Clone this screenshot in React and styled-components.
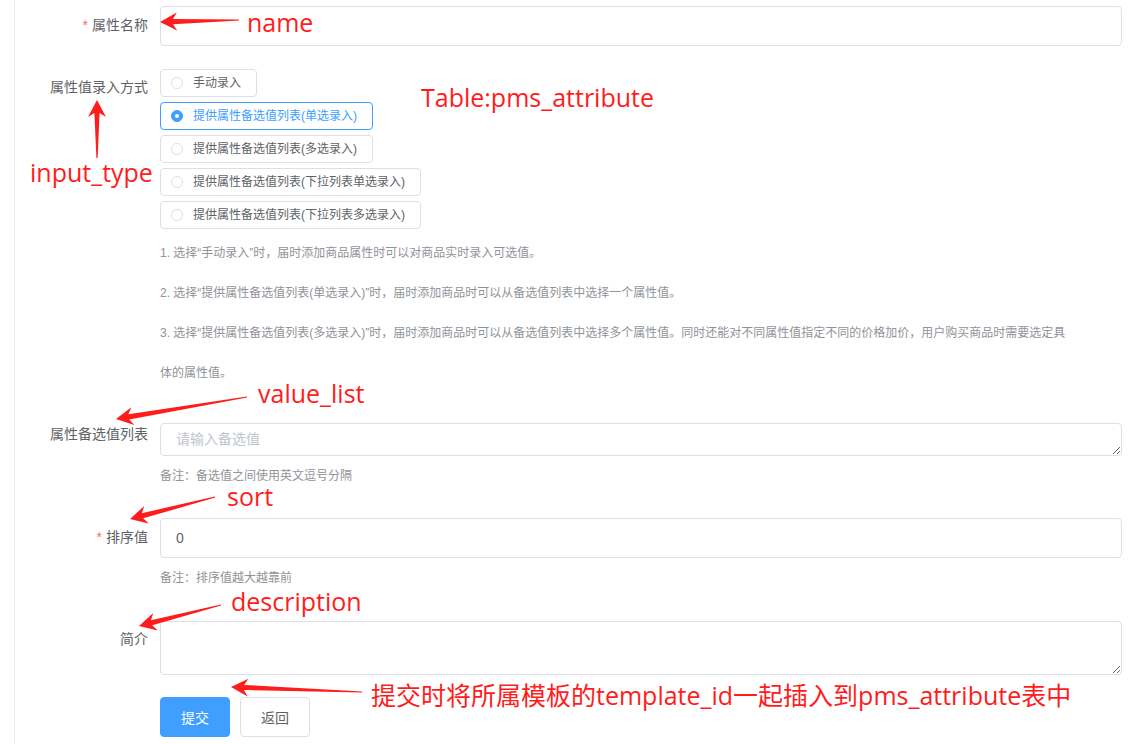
import React from "react";
import styled, { createGlobalStyle } from "styled-components";

const GlobalStyle = createGlobalStyle`
  html, body {
    margin: 0;
    padding: 0;
    background: #fff;
  }
  body {
    font-family: "Liberation Sans", "Noto Sans CJK SC", sans-serif;
  }
  * {
    box-sizing: border-box;
  }
`;

const RED = "#ff1c1c";

const radios = [
  { label: "手动录入", checked: false },
  { label: "提供属性备选值列表(单选录入)", checked: true },
  { label: "提供属性备选值列表(多选录入)", checked: false },
  { label: "提供属性备选值列表(下拉列表单选录入)", checked: false },
  { label: "提供属性备选值列表(下拉列表多选录入)", checked: false },
];

const notes = [
  { x: 247, y: 9, text: "name" },
  { x: 421, y: 84, text: "Table:pms_attribute" },
  { x: 30, y: 159, text: "input_type" },
  { x: 258, y: 380, text: "value_list" },
  { x: 227, y: 483, text: "sort" },
  { x: 231, y: 588, text: "description" },
  { x: 371, y: 682, text: "提交时将所属模板的template_id一起插入到pms_attribute表中" },
];

// tail -> tip
const arrows = [
  [239, 20, 160, 22],
  [97, 158, 97, 100],
  [247, 397, 116, 419],
  [215, 497, 130, 519],
  [221, 605, 139, 626],
  [362, 692, 231, 687],
];

const arrowPoints = ([x0, y0, x1, y1]) => {
  const dx = x1 - x0;
  const dy = y1 - y0;
  const len = Math.hypot(dx, dy);
  const ux = dx / len;
  const uy = dy / len;
  const nx = -uy;
  const ny = ux;
  const local = [
    [0, 0.6],
    [len - 13, 2.6],
    [len - 17, 9],
    [len, 0],
    [len - 17, -9],
    [len - 13, -2.6],
    [0, -0.6],
  ];
  return local
    .map(([a, b]) => `${(x0 + ux * a + nx * b).toFixed(1)},${(y0 + uy * a + ny * b).toFixed(1)}`)
    .join(" ");
};

const App = () => {
  return (
    <Page>
      <GlobalStyle />
      <Card>
        <FormItem>
          <Label>
            <Star>*</Star>属性名称
          </Label>
          <Content>
            <TextInput type="text" defaultValue="" />
          </Content>
        </FormItem>

        <FormItem>
          <Label>属性值录入方式</Label>
          <Content>
            <RadioGroup>
              {radios.map((r) => (
                <RadioOption key={r.label} $checked={r.checked}>
                  <RadioDot $checked={r.checked} />
                  <RadioText>{r.label}</RadioText>
                </RadioOption>
              ))}
            </RadioGroup>
            <Hints>
              <div>1. 选择“手动录入”时，届时添加商品属性时可以对商品实时录入可选值。</div>
              <div>2. 选择“提供属性备选值列表(单选录入)”时，届时添加商品时可以从备选值列表中选择一个属性值。</div>
              <div>
                3. 选择“提供属性备选值列表(多选录入)”时，届时添加商品时可以从备选值列表中选择多个属性值。同时还能对不同属性值指定不同的价格加价，用户购买商品时需要选定具
                <br />
                体的属性值。
              </div>
            </Hints>
          </Content>
        </FormItem>

        <FormItem>
          <Label>属性备选值列表</Label>
          <Content>
            <TextArea rows={1} placeholder="请输入备选值" $top={8} />
            <Note>备注：备选值之间使用英文逗号分隔</Note>
          </Content>
        </FormItem>

        <FormItem>
          <Label>
            <Star>*</Star>排序值
          </Label>
          <Content>
            <TextInput type="text" defaultValue="0" />
            <Note>备注：排序值越大越靠前</Note>
          </Content>
        </FormItem>

        <FormItem>
          <Label>简介</Label>
          <Content>
            <TextArea rows={2} $top={1} />
          </Content>
        </FormItem>

        <ButtonRow>
          <Button $primary>提交</Button>
          <Button>返回</Button>
        </ButtonRow>
      </Card>

      <Overlay width="1130" height="744" viewBox="0 0 1130 744">
        {arrows.map((a, i) => (
          <polygon key={i} points={arrowPoints(a)} fill={RED} />
        ))}
      </Overlay>
      {notes.map((n) => (
        <Annotation key={n.text} $x={n.x} $y={n.y}>
          {n.text}
        </Annotation>
      ))}
    </Page>
  );
};

const Page = styled.div`
  position: relative;
  width: 1130px;
  height: 744px;
  overflow: hidden;
  padding-left: 14px;
`;

const Card = styled.div`
  height: 100%;
  border-left: 1px solid #ebeef5;
  padding: 6px 8px 0 0;
`;

const FormItem = styled.div`
  display: flex;
  margin-bottom: 22px;
`;

const Label = styled.label`
  flex: none;
  width: 145px;
  padding-right: 12px;
  text-align: right;
  line-height: 38px;
  font-size: 14px;
  color: #606266;
`;

const Star = styled.span`
  color: #f56c6c;
  margin-right: 4px;
`;

const Content = styled.div`
  flex: 1;
  min-width: 0;
  line-height: 40px;
  font-size: 14px;
`;

const TextInput = styled.input`
  display: block;
  width: 100%;
  height: 40px;
  padding: 0 15px;
  border: 1px solid #dcdfe6;
  border-radius: 4px;
  font-family: inherit;
  font-size: 14px;
  color: #606266;
  outline: none;
`;

const TextArea = styled.textarea`
  display: block;
  width: 100%;
  margin-top: ${(p) => p.$top}px;
  padding: 5px 15px;
  border: 1px solid #dcdfe6;
  border-radius: 4px;
  font-family: inherit;
  font-size: 14px;
  line-height: 1.5;
  color: #606266;
  resize: vertical;
  outline: none;

  &::placeholder {
    color: #c0c4cc;
  }
`;

const RadioGroup = styled.div`
  display: flex;
  flex-direction: column;
  align-items: flex-start;
  gap: 5px;
  padding-top: 1px;
`;

const RadioOption = styled.label`
  display: inline-flex;
  align-items: center;
  height: 28px;
  padding: 0 15px 0 10px;
  border: 1px solid ${(p) => (p.$checked ? "#409eff" : "#dcdfe6")};
  border-radius: 4px;
  font-size: 12px;
  line-height: 1;
  color: ${(p) => (p.$checked ? "#409eff" : "#606266")};
`;

const RadioDot = styled.span`
  position: relative;
  width: 12px;
  height: 12px;
  border-radius: 50%;
  border: 1px solid ${(p) => (p.$checked ? "#409eff" : "#dcdfe6")};
  background: ${(p) => (p.$checked ? "#409eff" : "#fff")};

  &::after {
    content: "";
    display: ${(p) => (p.$checked ? "block" : "none")};
    position: absolute;
    left: 50%;
    top: 50%;
    width: 4px;
    height: 4px;
    margin: -2px 0 0 -2px;
    border-radius: 50%;
    background: #fff;
  }
`;

const RadioText = styled.span`
  margin-left: 10px;
`;

const Hints = styled.div`
  padding-top: 4px;
  font-size: 12px;
  line-height: 40px;
  color: #909399;
`;

const Note = styled.div`
  font-size: 12px;
  line-height: 40px;
  color: #909399;
`;

const ButtonRow = styled.div`
  display: flex;
  gap: 10px;
  padding-left: 145px;
`;

const Button = styled.button`
  height: 40px;
  padding: 0 20px;
  border-radius: 4px;
  border: 1px solid ${(p) => (p.$primary ? "#409eff" : "#dcdfe6")};
  background: ${(p) => (p.$primary ? "#409eff" : "#fff")};
  color: ${(p) => (p.$primary ? "#fff" : "#606266")};
  font-family: inherit;
  font-size: 14px;
  cursor: pointer;
`;

const Overlay = styled.svg`
  position: absolute;
  left: 0;
  top: 0;
  pointer-events: none;
`;

const Annotation = styled.span`
  position: absolute;
  left: ${(p) => p.$x}px;
  top: ${(p) => p.$y}px;
  font-family: "Open Sans", "Noto Sans CJK SC", sans-serif;
  font-size: 25px;
  line-height: 26px;
  color: ${RED};
  white-space: nowrap;
  pointer-events: none;
`;

export default App;
